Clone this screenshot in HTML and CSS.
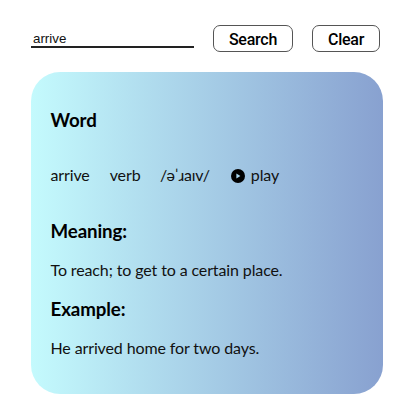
FILE: index.html
```
<!DOCTYPE html>
<html lang="en">
<head>
<meta charset="utf-8">
<title>Dictionary</title>
<link rel="stylesheet" href="styles.css">
</head>
<body>
<form class="search">
<input class="field" type="text" value="arrive" aria-label="Word">
<button class="btn" type="button">Search</button>
<button class="btn clear" type="button">Clear</button>
</form>
<main class="card">
<h3 class="title">Word</h3>
<div class="details">
<span class="w">arrive</span><span class="pos">verb</span><span class="ipa">/əˈɹaɪv/</span>
<span class="play"><svg class="icon" width="14" height="14" viewBox="0 0 14 14"><circle cx="7" cy="7" r="7"/><path d="M5.4 4.5 9.4 7 5.4 9.5z" fill="#a9d6ee"/></svg>play</span>
</div>
<h3 class="title meaning">Meaning:</h3>
<p class="text">To reach; to get to a certain place.</p>
<h3 class="title example">Example:</h3>
<p class="text">He arrived home for two days.</p>
</main>
</body>
</html>
```

FILE: styles.css
```
* { box-sizing: border-box; }
body { margin: 0; height: 400px; padding: 25px 17px 0 30.5px; background: #fff; color: #111; font-family: Lato, sans-serif; overflow: hidden; }
.search { display: flex; height: 27px; margin: 0 0 20px; }
.field { width: 163.5px; height: 23px; margin: 0 19px 0 0; padding: 6px 2px 0 2.5px; border: 0; border-bottom: 2px solid #222; outline: 0; background: none; font: 13.33px "Liberation Sans", sans-serif; color: #111; }
.btn { width: 80px; height: 27px; padding: 2px 0 0; border: 1px solid #555; border-radius: 7px; background: #fff; color: #000; font: 500 16px Roboto, sans-serif; letter-spacing: -.25px; }
.clear { width: 68px; margin-left: 19px; }
.card { width: 352.5px; height: 322px; padding: 37px 20px 0; border-radius: 29px; background: linear-gradient(to right, #c4fafd, #88a1d0); }
.title { margin: 0; color: #000; font-size: 18.7px; line-height: 22px; font-weight: 700; letter-spacing: -.1px; }
.details { display: flex; align-items: center; height: 20px; margin: 33px 0 36px; font-size: 16px; letter-spacing: -.12px; }
.pos { margin-left: 20px; }
.ipa { margin-left: 19.5px; letter-spacing: -.2px; }
.play { display: flex; align-items: center; gap: 6px; margin-left: 21px; }
.icon { margin-top: 3px; }
.text { margin: 18px 0; font-size: 16px; line-height: 20px; letter-spacing: -.12px; }
```
